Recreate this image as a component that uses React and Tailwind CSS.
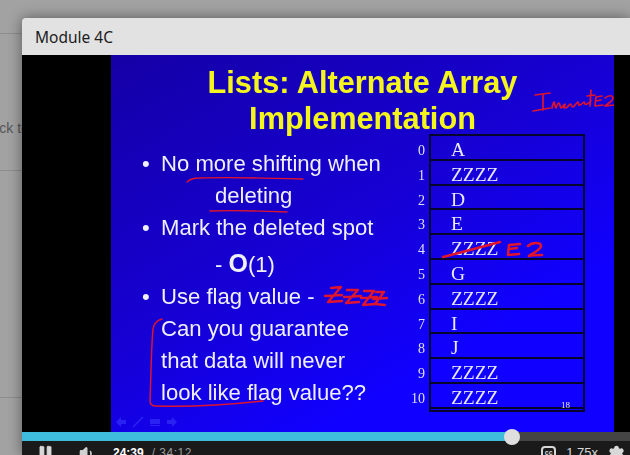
import { Pause, Volume1, Settings } from 'lucide-react';

const rows = ['A', 'ZZZZ', 'D', 'E', 'ZZZZ', 'G', 'ZZZZ', 'I', 'J', 'ZZZZ', 'ZZZZ'];

function Ink() {
  return (
    <svg className="absolute inset-0 w-[503px] h-[377px]" viewBox="111 55 503 377" fill="none" stroke="#e0142c" strokeLinecap="round" strokeLinejoin="round">
      {/* Insert E2 */}
      <g strokeWidth="1.7">
        <path d="M535 95l15-2M543 95v15M533 111l17-3" />
        <path d="M552 108c1-4 1-5 2-6c1 3 1 5 2 6c1-3 2-5 3-5c1 1 1 4 2 5c2-1 3-4 4-4c1 1-3 4 0 4c3 0 4-3 5-4c2 0 1 3 3 3c2-1 3-4 5-5c1 1 0 4 2 3c2-1 3-2 4-3c1 2 1 3 3 2c2-1 3-2 4-3M591 90l-1 16M587 96l8-1" />
        <path d="M596 97l6-1M596 97l-1 9l8-1M596 101l5-1" />
        <path d="M605 98c3-3 8-3 8 0c0 3-6 6-8 8c3 0 6-1 9-1" />
      </g>
      {/* row 4 strike and E2 */}
      <path d="M443 257c20-5 38-10 57-15" strokeWidth="2.4" />
      <path d="M520 244l-11 1l-1 10l11-1M509 249l8-1M528 246c4-4 13-4 13 0c0 4-10 8-12 10c4-1 9-1 13-1" strokeWidth="2.6" />
      {/* underlines */}
      <path d="M187 182c3-3 6-4 12-4c35-1 70 0 104 1" strokeWidth="1.4" />
      <path d="M210 211c26-1 52 0 77 1" strokeWidth="1.4" />
      {/* ZZZZ */}
      <g strokeWidth="2.4">
        <path d="M331 288l10-1l-13 15l14-1M325 296l17-1" />
        <path d="M347 290h11l-12 13l13-1M344 297l17-1" />
        <path d="M364 291h10l-11 14l12-1M361 298l16-1" />
        <path d="M376 292h8l-9 12l10 1M373 299l14-1" />
      </g>
      {/* bracket */}
      <path d="M162 319c-4 1-8 4-9 10c-2 22-2 50-3 72c0 3 2 5 6 5c36 1 72-1 107-5" strokeWidth="1.5" />
    </svg>
  );
}

function Slide() {
  return (
    <div className="relative w-[503px] h-full overflow-hidden bg-[linear-gradient(150deg,#1500a6_0%,#1600d4_45%,#1000ff_75%,#1000ff_100%)] blur-[0.5px]">
      <div className="pt-[10px] text-center text-[30.7px] leading-[36px] font-bold text-[#f5f51e]">
        <div>Lists: Alternate Array</div>
        <div>Implementation</div>
      </div>
      <div className="flex mt-[-3px]">
        <div className="w-[300px] pl-[31px] pt-[14px] text-[22.1px] text-[#f0f0fa]">
          <div className="flex h-[32px] items-center">
            <span className="w-[19px]">•</span>No more shifting when
          </div>
          <div className="h-[32px] leading-[32px] pl-[73px]">deleting</div>
          <div className="flex h-[32px] items-center">
            <span className="w-[19px]">•</span>Mark the deleted spot
          </div>
          <div className="h-[36px] leading-[38px] pl-[73px]">
            - <b className="text-[25px]">O</b>(1)
          </div>
          <div className="flex h-[33px] items-center">
            <span className="w-[19px]">•</span>Use flag value -
          </div>
          <div className="h-[32px] leading-[32px] pl-[19px]">Can you guarantee</div>
          <div className="h-[32px] leading-[32px] pl-[19px]">that data will never</div>
          <div className="h-[32px] leading-[32px] pl-[19px]">look like flag value??</div>
        </div>
        <div className="flex w-[177px] ml-[-3px] font-['Liberation_Serif',serif]">
          <div className="w-[21px] pt-[3px] text-[#dfe0f5] text-[14px]">
            {rows.map((_, i) => (
              <div key={i} className="h-[24.8px] leading-[28px] pr-[4px] text-right">{i}</div>
            ))}
          </div>
          <div className="relative w-[157px] h-[278px] border-[2.5px] border-[#05052e] text-[19.5px] text-[#e8e8ff]">
            {rows.map((r, i) => (
              <div key={i} className="h-[24.8px] pl-[20px] leading-[27px] border-b-[2.5px] border-[#05052e] last:border-b-0">{r}</div>
            ))}
            <span className="absolute right-[13px] bottom-[-1px] text-[9px] leading-[12px]">18</span>
          </div>
        </div>
      </div>
      <div className="absolute left-[4px] top-[361px] flex gap-[5px] text-[#2a22f2]">
        <svg width="12" height="12" viewBox="0 0 12 12" fill="currentColor"><path d="M6 1L1 6l5 5V8h5V4H6z" /></svg>
        <svg width="12" height="12" viewBox="0 0 12 12" stroke="currentColor" strokeWidth="1.5"><path d="M1 11L11 1" /></svg>
        <svg width="12" height="12" viewBox="0 0 12 12" fill="currentColor"><path d="M1 3h10v5H1zM1 9h10v1H1z" /></svg>
        <svg width="12" height="12" viewBox="0 0 12 12" fill="currentColor"><path d="M6 1l5 5l-5 5V8H1V4h5z" /></svg>
      </div>
      <Ink />
    </div>
  );
}

function Controls() {
  return (
    <div className="relative bg-[#1a1a1a] h-[40px]">
      <div className="relative h-[9px] bg-[#444444]">
        <div className="h-full w-[490px] bg-[#3fbbdb]" />
        <div className="absolute left-[482px] top-[-3px] w-[16px] h-[16px] rounded-full bg-[#dedede]" />
      </div>
      <div className="flex items-center h-[24px] text-[12px] font-['Liberation_Sans',sans-serif]">
        <Pause size={19} className="ml-[14px] text-[#d8d8d8]" fill="#d8d8d8" strokeWidth={1} />
        <Volume1 size={17} className="ml-[24px] text-[#d0d0d0]" fill="#d0d0d0" />
        <span className="ml-[17px] font-bold text-white">24:39</span>
        <span className="ml-[8px] text-[#9a9a9a] tracking-[0.5px]">/ 34:12</span>
        <div className="ml-auto flex items-center pr-[5px] text-[#d8d8d8]">
          <span className="w-[15px] h-[14px] rounded-[4px] border-2 border-[#d8d8d8] text-[7px] leading-[10px] text-center font-bold">cc</span>
          <span className="ml-[10px] text-[13px]">1.75x</span>
          <Settings size={17} fill="#d8d8d8" className="ml-[10px] text-[#d8d8d8]" />
        </div>
      </div>
    </div>
  );
}

export default function App() {
  return (
    <div className="relative w-[630px] h-[455px] overflow-hidden bg-[#a2a2a2] font-['Liberation_Sans',sans-serif]">
      <div className="h-[34px] border-b border-[#8c8c8c]" />
      <div className="h-[137px] border-b border-[#8c8c8c] pt-[84px] ml-[-17px] text-[14px] leading-[20px] text-[#555555] whitespace-nowrap">Click to</div>
      <div className="h-[227px] border-b border-[#8c8c8c]" />

      {/* modal */}
      <div className="absolute left-[22px] top-[18px] w-[608px] h-[437px] rounded-tl-[4px] overflow-hidden shadow-[0_0_14px_rgba(0,0,0,0.45)]">
        <div className="h-[37px] bg-[#e2e2e2] pl-[13px] text-[15.5px] leading-[38px] text-[#1c1c1c] font-['Noto_Sans',sans-serif]">Module 4C</div>
        <div className="h-[377px] bg-black pl-[89px]">
          <Slide />
        </div>
        <Controls />
      </div>
    </div>
  );
}
